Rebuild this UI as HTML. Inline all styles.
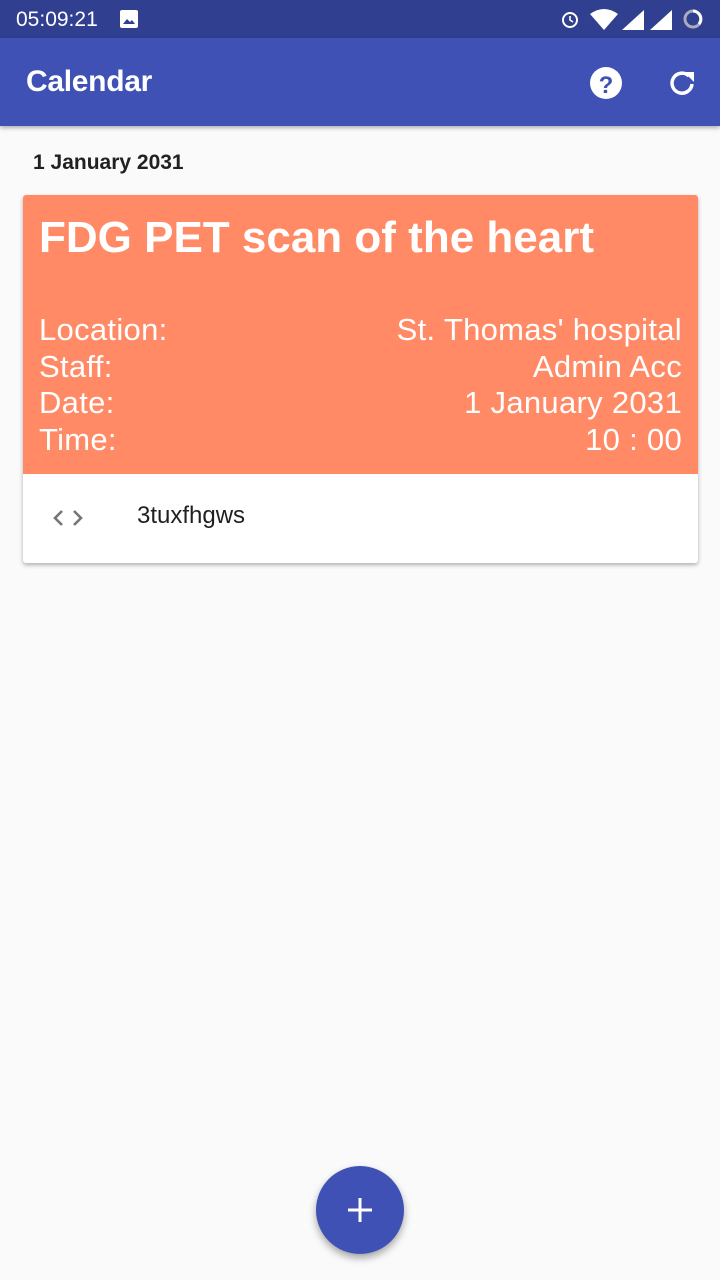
<!DOCTYPE html>
<html><head><meta charset="utf-8"><style>
*{margin:0;padding:0;box-sizing:border-box}
body{width:720px;height:1280px;background:#fafafa;font-family:"Liberation Sans",sans-serif;position:relative;overflow:hidden}
.sb{position:absolute;top:0;left:0;width:720px;height:38px;background:#303f8f;color:#fff}
.ab{position:absolute;top:38px;left:0;width:720px;height:88px;background:#3f51b5;box-shadow:0 2px 4px rgba(0,0,0,.3)}
.ab h1{position:absolute;left:26px;top:27px;font-size:30px;font-weight:bold;color:#fff;letter-spacing:-0.3px}
.date{position:absolute;left:33px;top:151px;font-size:21px;font-weight:bold;color:#212121}
.card{position:absolute;left:23px;top:195px;width:675px;height:368px;background:#fff;border-radius:3px;box-shadow:0 2px 4px rgba(0,0,0,.3);overflow:hidden}
.top{height:279px;background:#ff8a65;color:#fff;position:relative}
.top h2{position:absolute;left:16px;top:18px;font-size:44px;font-weight:bold}
.rows{position:absolute;left:16px;right:16px;top:117px;font-size:31px;line-height:36.5px;font-weight:300;letter-spacing:0.3px}
.r{display:flex;justify-content:space-between}
.foot{position:relative;height:89px}
.foot span{position:absolute;left:114px;top:28px;font-size:24px;color:#212121}
.fab{position:absolute;left:316px;top:1166px;width:88px;height:88px;border-radius:50%;background:#3f51b5;box-shadow:0 4px 8px rgba(0,0,0,.35)}
</style></head><body>
<div class="sb">
<span style="position:absolute;left:16px;top:8px;font-size:21px">05:09:21</span>
<svg style="position:absolute;left:120px;top:10px" width="18" height="18"><rect x="0" y="0" width="18" height="18" rx="2" fill="#fff"/><path d="M3 14l4-5 3 3 2-2 3 4z" fill="#303f8f"/></svg>
<svg style="position:absolute;left:558px;top:6px" width="150" height="26">
<circle cx="12" cy="14" r="7" fill="none" stroke="#fff" stroke-width="2"/><path d="M12 10v4l3 2" stroke="#fff" stroke-width="1.6" fill="none"/>
<path d="M32 8q14-10 28 0l-14 16z" fill="#fff"/>
<path d="M64 24l22-20v20z" fill="#fff"/>
<path d="M92 24l22-20v20z" fill="#fff"/>
<circle cx="135" cy="13" r="8" fill="none" stroke="#aab" stroke-width="3"/><path d="M135 5a8 8 0 0 1 6 13" stroke="#fff" stroke-width="3" fill="none"/>
</svg>
</div>
<div class="ab"><h1>Calendar</h1>
<svg style="position:absolute;left:589px;top:28px" width="34" height="34"><circle cx="17" cy="17" r="16" fill="#fff"/><text x="17" y="27" text-anchor="middle" font-family="Liberation Sans" font-weight="bold" font-size="24" fill="#3f51b5">?</text></svg>
<svg style="position:absolute;left:667px;top:30px" width="30" height="30"><path d="M22 8A10 10 0 1 0 25 16" fill="none" stroke="#fff" stroke-width="3.5"/><path d="M17 4h10v10z" fill="#fff"/></svg>
</div>
<div class="date">1 January 2031</div>
<div class="card">
<div class="top"><h2>FDG PET scan of the heart</h2>
<div class="rows">
<div class="r"><span>Location:</span><span>St. Thomas' hospital</span></div>
<div class="r"><span>Staff:</span><span>Admin Acc</span></div>
<div class="r"><span>Date:</span><span>1 January 2031</span></div>
<div class="r"><span>Time:</span><span>10 : 00</span></div>
</div></div>
<div class="foot">
<svg style="position:absolute;left:28px;top:34px" width="34" height="20"><path d="M11 3l-7 7 7 7M23 3l7 7-7 7" fill="none" stroke="#757575" stroke-width="2.6"/></svg>
<span>3tuxfhgws</span></div>
</div>
<div class="fab"><svg width="88" height="88"><path d="M44 32v24M32 44h24" stroke="#fff" stroke-width="3"/></svg></div>
</body></html>
